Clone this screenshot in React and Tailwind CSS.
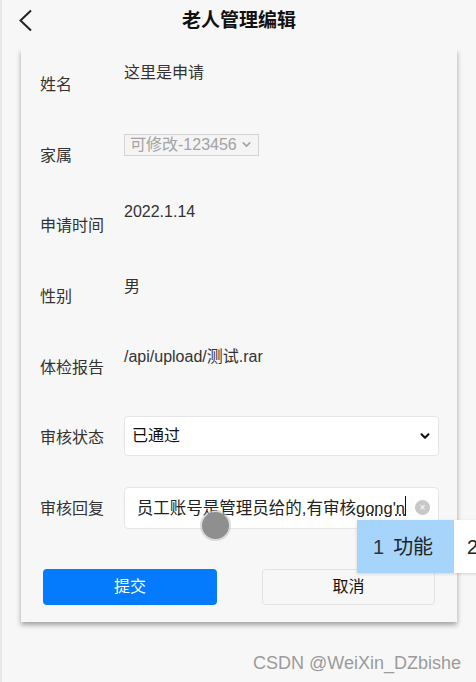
import { ChevronDown } from 'lucide-react'

const FONT = { fontFamily: '"Liberation Sans", "Noto Sans CJK SC", sans-serif' }

function Row({ label, children, valueTop = 'mt-[13px]' }) {
  return (
    <div className="flex h-[70.67px]">
      <div className="shrink-0 w-[103px] pl-[19px] mt-[25px] h-[22px] leading-[22px] text-[16px] text-[#333] whitespace-nowrap">{label}</div>
      <div className={`flex-1 min-w-0 pr-[18px] ${valueTop}`}>{children}</div>
    </div>
  )
}

function Text({ children }) {
  return <div className="h-[22px] leading-[22px] text-[16px] text-[#333]">{children}</div>
}

export default function App() {
  return (
    <div style={FONT} className="relative w-[476px] h-[682px] overflow-hidden bg-[#f7f7f7] border-l-2 border-[#e8e8e8]">
      <header className="relative z-10 h-[49px] bg-[#f7f7f7] flex justify-center">
        <svg className="absolute left-[16px] top-[9px]" width="16" height="24" viewBox="0 0 16 24">
          <path d="M13 1.5 L2.5 11.5 L13 21.5" fill="none" stroke="#222" strokeWidth="2" />
        </svg>
        <h1 className="mt-[9px] h-[24px] leading-[24px] text-[19px] font-bold text-[#111]">老人管理编辑</h1>
      </header>

      <section className="ml-[19px] w-[436px] bg-[#f7f7f7] shadow-[0_3px_5px_rgba(0,0,0,0.35)] pb-[17px]">
        <Row label="姓名">
          <Text>这里是申请</Text>
        </Row>
        <Row label="家属">
          <div className="inline-flex items-center gap-[3px] h-[22px] px-[5px] border border-[#d4d4d4] bg-[#f4f4f4] text-[16px] text-[#a3a3a3]">
            可修改-123456
            <ChevronDown size={13} strokeWidth={3} className="text-[#a3a3a3]" />
          </div>
        </Row>
        <Row label="申请时间" valueTop="mt-[11px]">
          <Text>2022.1.14</Text>
        </Row>
        <Row label="性别" valueTop="mt-[15px]">
          <Text>男</Text>
        </Row>
        <Row label="体检报告" valueTop="mt-[14px]">
          <Text>/api/upload/测试.rar</Text>
        </Row>
        <Row label="审核状态" valueTop="mt-[14px]">
          <div className="flex items-center justify-between h-[40px] pl-[7px] pr-[6px] bg-white border border-[#e6e6e6] rounded-[4px] text-[16px] text-[#111]">
            <span>已通过</span>
            <ChevronDown size={14} strokeWidth={3.5} className="text-[#111]" />
          </div>
        </Row>
        <Row label="审核回复" valueTop="mt-[14px]">
          <div className="flex items-center h-[42px] pl-[12px] pr-[8px] bg-white border border-[#e6e6e6] rounded-[4px]">
            <div className="flex-1 min-w-0 flex justify-end overflow-hidden whitespace-nowrap text-[16.5px] text-[#222]">
              <span className="shrink-0">员工账号是管理员给的,有审核<span className="underline decoration-dotted">gong'n</span></span>
              <span className="w-px h-[20px] bg-[#111] shrink-0" />
            </div>
            <div className="shrink-0 ml-[9px] w-[15px] h-[15px] rounded-full bg-[#c8c8c8] flex items-center justify-center text-white text-[10px] leading-none">×</div>
          </div>
        </Row>
        <div className="flex justify-between pl-[22px] pr-[22px] mt-[25px]">
          <button type="button" className="w-[174px] h-[36px] rounded-[4px] bg-[#047bfc] text-white text-[16px]">提交</button>
          <button type="button" className="w-[173px] h-[36px] rounded-[4px] border border-[#e3e3e3] bg-[#f7f7f7] text-[#111] text-[16px]">取消</button>
        </div>
      </section>

      <div className="absolute left-[200px] top-[512px] w-[27px] h-[27px] rounded-full bg-[#8f8f8f] ring-2 ring-[#c4c4c4]/60" />

      <div className="absolute left-[355px] top-[520px] h-[53px] flex text-[20px] text-[#222] shadow-[0_1px_3px_rgba(0,0,0,0.15)]">
        <div className="w-[97px] bg-[#a6d4fa] flex items-center pl-[16px] gap-[9px]">
          <span className="text-[#333]">1</span>
          <span>功能</span>
        </div>
        <div className="w-[40px] bg-white flex items-center pl-[13px]">2</div>
      </div>

      <div className="absolute right-[15px] top-[652px] text-[18px] leading-[22px] text-[#9b9b9b]">CSDN @WeiXin_DZbishe</div>
    </div>
  )
}
